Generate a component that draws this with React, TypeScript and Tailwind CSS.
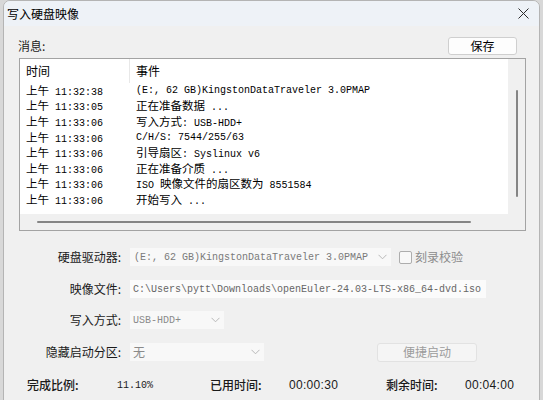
const sans = { fontFamily: '"Noto Sans CJK SC", "Noto Sans", sans-serif' };
const mono = { fontFamily: '"Liberation Mono", "Noto Sans CJK SC", monospace' };

const logRows = [
  ['上午 11:32:38', '(E:, 62 GB)KingstonDataTraveler 3.0PMAP'],
  ['上午 11:33:05', '正在准备数据 ...'],
  ['上午 11:33:06', '写入方式: USB-HDD+'],
  ['上午 11:33:06', 'C/H/S: 7544/255/63'],
  ['上午 11:33:06', '引导扇区: Syslinux v6'],
  ['上午 11:33:06', '正在准备介质 ...'],
  ['上午 11:33:06', 'ISO 映像文件的扇区数为 8551584'],
  ['上午 11:33:06', '开始写入 ...'],
];

// CJK runs a bit larger than the half-width Latin, like SimSun
function Mixed({ text }: { text: string }) {
  const parts = text.split(/([\u3000-\u9fff\uff00-\uffef]+)/).filter(Boolean);
  return (
    <>
      {parts.map((p, i) =>
        /[\u3000-\u9fff\uff00-\uffef]/.test(p) ? (
          <span key={i} className="text-[11.5px]" style={sans}>
            {p}
          </span>
        ) : (
          <span key={i}>{p}</span>
        )
      )}
    </>
  );
}

function Chevron() {
  return (
    <svg width="9" height="6" viewBox="0 0 9 6" className="shrink-0">
      <path d="M0.5 0.8 L4.5 4.8 L8.5 0.8" fill="none" stroke="#b8b8b8" strokeWidth="1" />
    </svg>
  );
}

function FormRow({ label, children, className = '' }: { label: string; children: React.ReactNode; className?: string }) {
  return (
    <div className={`flex items-center h-[18px] ${className}`}>
      <div className="w-[117px] text-right text-[12px] text-[#1a1a1a]" style={sans}>
        {label}
      </div>
      <div className="ml-[9px] flex items-center h-full">{children}</div>
    </div>
  );
}

export default function App() {
  return (
    <div className="w-[543px] h-[400px] overflow-hidden bg-[#d8d8d8] flex" style={sans}>
      <div className="ml-[3px] w-[537px] h-[410px] border border-[#b4b4b4] rounded-tl-[7px] rounded-tr-[7px] overflow-hidden bg-[#f0f0f0] flex flex-col">
        {/* Title bar */}
        <div className="h-[25px] bg-[#eef2f7] flex items-center justify-between shrink-0">
          <span className="pl-[3px] text-[12px] text-black">写入硬盘映像</span>
          <svg width="11" height="11" viewBox="0 0 11 11" className="mr-[10px]">
            <path d="M0.5 0.5 L10.5 10.5 M10.5 0.5 L0.5 10.5" stroke="#2b2b2b" strokeWidth="1" />
          </svg>
        </div>

        {/* Messages header */}
        <div className="flex items-center justify-between pl-[14px] pr-[22px] mt-[11px] h-[18px]">
          <span className="text-[12px] text-[#1a1a1a]">消息:</span>
          <div className="w-[69px] h-[18px] border border-[#cfcfcf] rounded-[3px] bg-[#fdfdfd] flex items-center justify-center text-[12px] text-black">
            保存
          </div>
        </div>

        {/* Log list */}
        <div className="ml-[15px] mt-[3px] w-[507px] h-[173px] border border-[#a3a3a3] bg-[#f0f0f0] flex flex-col shrink-0">
          <div className="flex h-[155px]">
            <div className="w-[488px] h-full bg-white flex flex-col">
              <div className="flex h-[24px] items-center text-[12px] text-black">
                <div className="w-[109px] pl-[6px]">时间</div>
                <div className="w-px h-full bg-[#e8e8e8]" />
                <div className="pl-[6px]">事件</div>
              </div>
              <div className="text-[10px] text-black" style={mono}>
                {logRows.map(([t, e], i) => (
                  <div key={i} className="flex items-center h-[15.6px] whitespace-pre">
                    <div className="w-[110px] pl-[6px]">
                      <Mixed text={t} />
                    </div>
                    <div className="pl-[6px]">
                      <Mixed text={e} />
                    </div>
                  </div>
                ))}
              </div>
            </div>
            <div className="flex-1 flex justify-center">
              <div className="mt-[31px] w-[2px] h-[107px] rounded-full bg-[#858585]" />
            </div>
          </div>
          <div className="h-[16px] pl-[17px] flex items-center">
            <div className="w-[434px] h-[2px] rounded-full bg-[#858585]" />
          </div>
        </div>

        {/* Form */}
        <div className="mt-[17px] flex flex-col">
          <FormRow label="硬盘驱动器:">
            <div className="w-[261px] h-[18px] bg-[#f8f8f8] flex items-center justify-between pl-[4px] pr-[4px]">
              <span className="text-[10px] text-[#7a7a7a] whitespace-pre" style={mono}>
                (E:, 62 GB)KingstonDataTraveler 3.0PMAP
              </span>
              <Chevron />
            </div>
            <div className="ml-[8px] w-[13px] h-[13px] border border-[#adadad] rounded-[2px] bg-[#f8f8f8]" />
            <span className="ml-[3px] text-[12px] text-[#8c8c8c]">刻录校验</span>
          </FormRow>

          <FormRow label="映像文件:" className="mt-[14px]">
            <div className="w-[356px] h-[18px] bg-[#fbfbfb] flex items-center pl-[3px]">
              <span className="text-[10px] text-[#666] whitespace-pre" style={mono}>
                C:\Users\pytt\Downloads\openEuler-24.03-LTS-x86_64-dvd.iso
              </span>
            </div>
          </FormRow>

          <FormRow label="写入方式:" className="mt-[13px]">
            <div className="w-[94px] h-[18px] bg-[#f8f8f8] flex items-center justify-between pl-[3px] pr-[4px]">
              <span className="text-[10px] text-[#8a8a8a]" style={mono}>
                USB-HDD+
              </span>
              <Chevron />
            </div>
          </FormRow>

          <FormRow label="隐藏启动分区:" className="mt-[14px]">
            <div className="w-[134px] h-[18px] bg-[#f8f8f8] flex items-center justify-between pl-[3px] pr-[4px]">
              <span className="text-[12px] text-[#8a8a8a]">无</span>
              <Chevron />
            </div>
            <div className="ml-[113px] w-[100px] h-[19px] border border-[#e2e2e2] rounded-[3px] bg-[#f5f5f5] flex items-center justify-center text-[12px] text-[#9c9c9c]">
              便捷启动
            </div>
          </FormRow>
        </div>

        {/* Progress */}
        <div className="mt-[15px] h-[18px] pl-[23px] flex items-center text-[12px] text-[#1a1a1a]">
          <span className="w-[90px] font-medium">完成比例:</span>
          <span className="w-[93px] text-[10px]" style={mono}>
            11.10%
          </span>
          <span className="w-[79px] font-medium">已用时间:</span>
          <span className="w-[97px] tracking-[0.3px]" style={{ fontFamily: '"Liberation Sans", sans-serif' }}>
            00:00:30
          </span>
          <span className="w-[79px] font-medium">剩余时间:</span>
          <span className="tracking-[0.3px]" style={{ fontFamily: '"Liberation Sans", sans-serif' }}>
            00:04:00
          </span>
        </div>
      </div>
    </div>
  );
}
